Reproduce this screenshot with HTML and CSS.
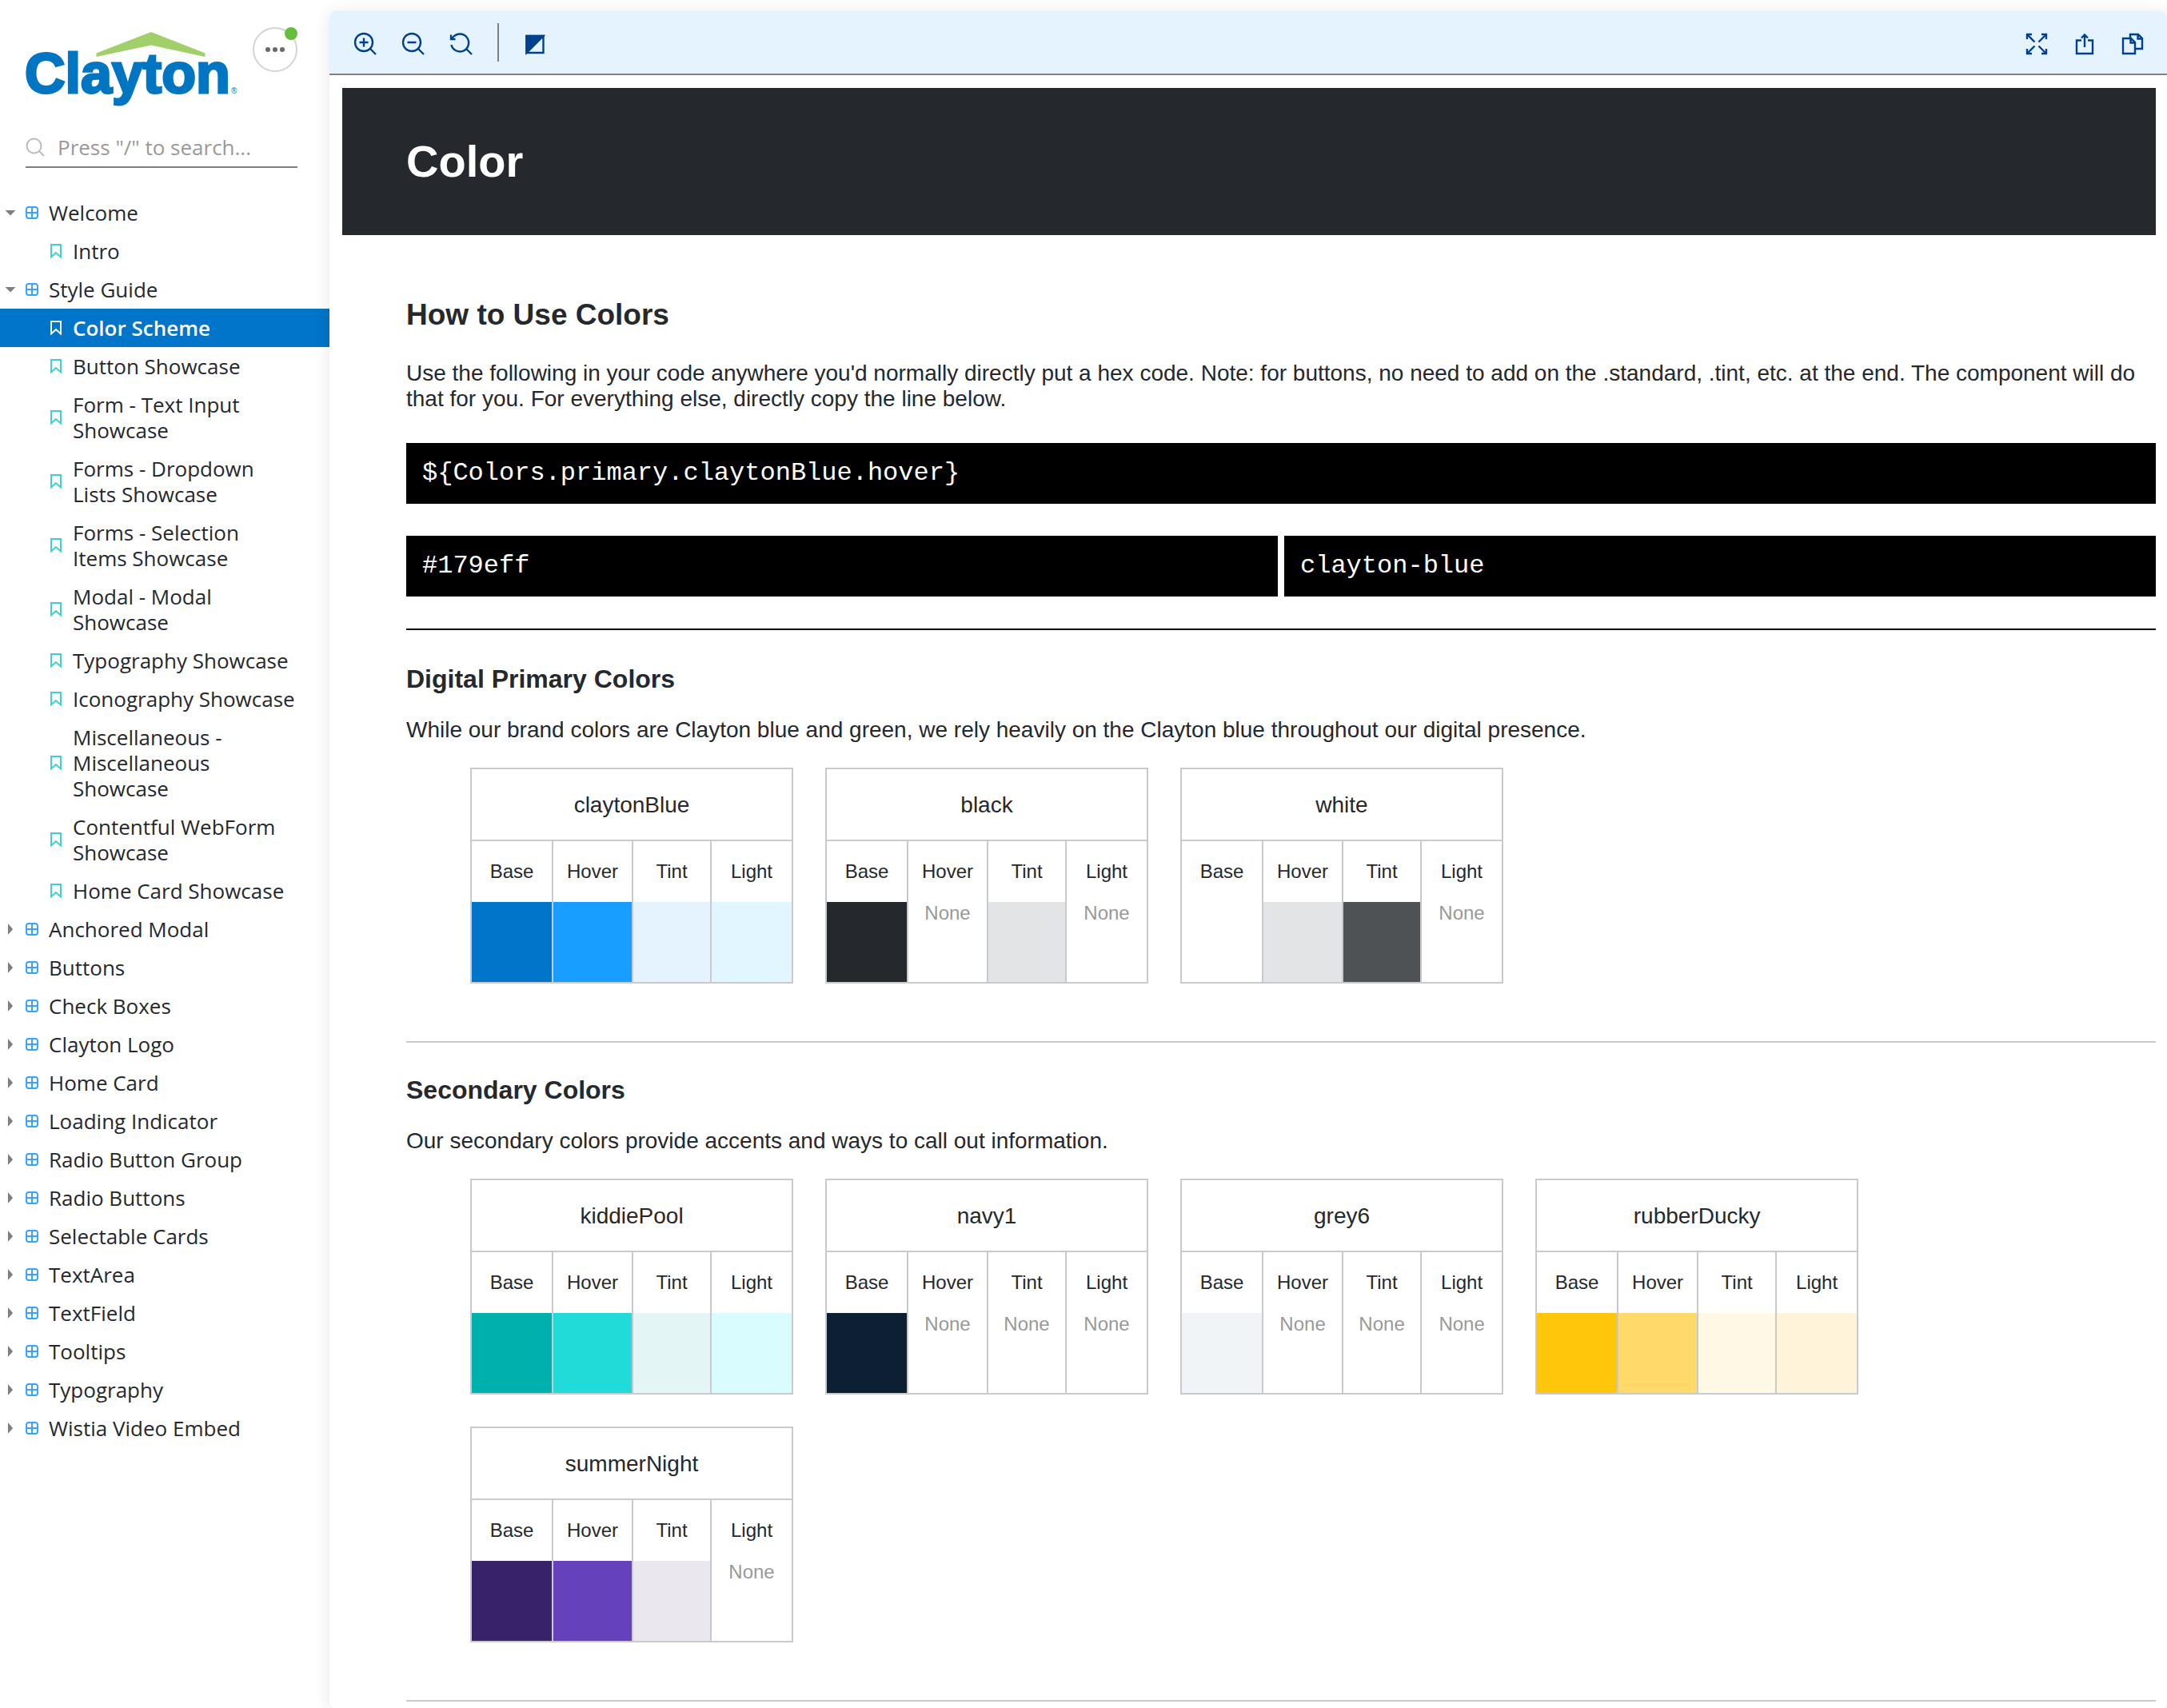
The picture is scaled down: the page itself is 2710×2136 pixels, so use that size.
FILE: index.html
```html
<!DOCTYPE html>
<html lang="en">
<head>
<meta charset="utf-8">
<title>Color Scheme - Clayton</title>
<link rel="stylesheet" href="styles.css">
</head>
<body>
<svg class="sprite" aria-hidden="true">
  <symbol id="component" viewBox="0 0 16 16"><rect x="1" y="1" width="14" height="14" rx="3"/><path d="M8 1v14M1 8h14"/></symbol>
  <symbol id="bookmark" viewBox="0 0 14 18"><path d="M1 1h12v15.500l-6-5.500-6 5.500z"/></symbol>
</svg>
<div class="layout">
  <aside class="sidebar">
    <header class="brand">
      <a class="logo" href="#" aria-label="Clayton">
        <svg width="266" height="92" viewBox="0 0 266 92">
          <path class="roof" d="M88.500 26.500 157 0l67.500 26.500V31L157 16.500 88.500 31z"/>
          <text class="wordmark" x="-1" y="76">Clayton</text>
          <text class="mark" x="257" y="77">®</text>
        </svg>
      </a>
      <button class="menu-button" type="button" aria-label="Menu">
        <svg width="26" height="8" viewBox="0 0 26 8"><circle cx="4" cy="4" r="3"/><circle cx="13" cy="4" r="3"/><circle cx="22" cy="4" r="3"/></svg>
        <span class="badge"></span>
      </button>
    </header>
    <label class="search">
      <svg width="24" height="24" viewBox="0 0 24 24"><circle cx="10.500" cy="10.500" r="9"/><path d="m17 17 6 6"/></svg>
      <input type="text" placeholder="Press &quot;/&quot; to search..." aria-label="Search">
    </label>
    <nav class="tree">
      <a class="group open" href="#"><i></i><svg><use href="#component"/></svg><span>Welcome</span></a>
      <a class="story" href="#"><svg><use href="#bookmark"/></svg><span>Intro</span></a>
      <a class="group open" href="#"><i></i><svg><use href="#component"/></svg><span>Style Guide</span></a>
      <a class="story selected" href="#"><svg><use href="#bookmark"/></svg><span>Color Scheme</span></a>
      <a class="story" href="#"><svg><use href="#bookmark"/></svg><span>Button Showcase</span></a>
      <a class="story" href="#"><svg><use href="#bookmark"/></svg><span>Form - Text Input Showcase</span></a>
      <a class="story" href="#"><svg><use href="#bookmark"/></svg><span>Forms - Dropdown Lists Showcase</span></a>
      <a class="story" href="#"><svg><use href="#bookmark"/></svg><span>Forms - Selection Items Showcase</span></a>
      <a class="story" href="#"><svg><use href="#bookmark"/></svg><span>Modal - Modal Showcase</span></a>
      <a class="story" href="#"><svg><use href="#bookmark"/></svg><span>Typography Showcase</span></a>
      <a class="story" href="#"><svg><use href="#bookmark"/></svg><span>Iconography Showcase</span></a>
      <a class="story" href="#"><svg><use href="#bookmark"/></svg><span>Miscellaneous - Miscellaneous Showcase</span></a>
      <a class="story" href="#"><svg><use href="#bookmark"/></svg><span>Contentful WebForm Showcase</span></a>
      <a class="story" href="#"><svg><use href="#bookmark"/></svg><span>Home Card Showcase</span></a>
      <a class="group" href="#"><i></i><svg><use href="#component"/></svg><span>Anchored Modal</span></a>
      <a class="group" href="#"><i></i><svg><use href="#component"/></svg><span>Buttons</span></a>
      <a class="group" href="#"><i></i><svg><use href="#component"/></svg><span>Check Boxes</span></a>
      <a class="group" href="#"><i></i><svg><use href="#component"/></svg><span>Clayton Logo</span></a>
      <a class="group" href="#"><i></i><svg><use href="#component"/></svg><span>Home Card</span></a>
      <a class="group" href="#"><i></i><svg><use href="#component"/></svg><span>Loading Indicator</span></a>
      <a class="group" href="#"><i></i><svg><use href="#component"/></svg><span>Radio Button Group</span></a>
      <a class="group" href="#"><i></i><svg><use href="#component"/></svg><span>Radio Buttons</span></a>
      <a class="group" href="#"><i></i><svg><use href="#component"/></svg><span>Selectable Cards</span></a>
      <a class="group" href="#"><i></i><svg><use href="#component"/></svg><span>TextArea</span></a>
      <a class="group" href="#"><i></i><svg><use href="#component"/></svg><span>TextField</span></a>
      <a class="group" href="#"><i></i><svg><use href="#component"/></svg><span>Tooltips</span></a>
      <a class="group" href="#"><i></i><svg><use href="#component"/></svg><span>Typography</span></a>
      <a class="group" href="#"><i></i><svg><use href="#component"/></svg><span>Wistia Video Embed</span></a>
    </nav>
  </aside>

  <main class="panel">
    <div class="toolbar">
      <button type="button" aria-label="Zoom in"><svg viewBox="-1 -2 28 28"><circle cx="12" cy="12" r="11"/><path d="M12 6.500v11M6.500 12h11M20 20l7 7"/></svg></button>
      <button type="button" aria-label="Zoom out"><svg viewBox="-1 -2 28 28"><circle cx="12" cy="12" r="11"/><path d="M6.500 12h11M20 20l7 7"/></svg></button>
      <button type="button" aria-label="Reset zoom"><svg viewBox="-1 -2 28 28"><path d="M1.400 15A11 11 0 1 0 4.500 4.500M20 20l7 7"/><path d="M1 2.500V8h5.500M1.500 7.500l3.500-3.500"/></svg></button>
      <span class="divider"></span>
      <button type="button" aria-label="Change background"><svg viewBox="-1 -2 28 28"><path d="M1.500 4h21v21h-21z"/><path class="solid" d="M1.500 4h21l-21 21z"/></svg></button>
      <span class="spacer"></span>
      <button type="button" aria-label="Go full screen"><svg viewBox="-1 -2 28 28"><path d="M11.500 11.500 3 3M16.500 11.500 25 3M11.500 16.500 3 25M16.500 16.500 25 25"/><path d="M2 8V2h6M20 2h6v6M2 20v6h6M20 26h6v-6"/></svg></button>
      <button type="button" aria-label="Open in new tab"><svg viewBox="-1 -2 28 28"><path d="M10 9.500H4V26h20V9.500h-6M14 18V2.500M10 6.500l4-4 4 4"/></svg></button>
      <button type="button" aria-label="Copy link"><svg viewBox="-1 -2 28 28"><path d="M2 7h10l5 5v14H2zM11 7V2h10l5 5v13h-9M11.500 7v5.500H17M20.500 2v5.500H26"/></svg></button>
    </div>
    <div class="canvas">
      <div class="banner"><h1>Color</h1></div>
      <div class="content">
        <h2>How to Use Colors</h2>
        <p class="intro">Use the following in your code anywhere you'd normally directly put a hex code. Note: for buttons, no need to add on the .standard, .tint, etc. at the end. The component will do that for you. For everything else, directly copy the line below.</p>
        <div class="codes">
          <code class="wide">${Colors.primary.claytonBlue.hover}</code>
          <code>#179eff</code>
          <code>clayton-blue</code>
        </div>
        <section class="first">
          <h3>Digital Primary Colors</h3>
          <p>While our brand colors are Clayton blue and green, we rely heavily on the Clayton blue throughout our digital presence.</p>
          <div class="cards">
            <table>
              <colgroup><col class="c1"><col class="c2"><col class="c3"><col class="c4"></colgroup>
              <tr><th class="name" colspan="4">claytonBlue</th></tr>
              <tr><th>Base</th><th>Hover</th><th>Tint</th><th>Light</th></tr>
              <tr><td style="background-color:#0075c9"></td><td style="background-color:#179eff"></td><td style="background-color:#e5f3ff"></td><td style="background-color:#e2f6ff"></td></tr>
            </table>
            <table>
              <colgroup><col class="c1"><col class="c2"><col class="c3"><col class="c4"></colgroup>
              <tr><th class="name" colspan="4">black</th></tr>
              <tr><th>Base</th><th>Hover</th><th>Tint</th><th>Light</th></tr>
              <tr><td style="background-color:#25282d"></td><td>None</td><td style="background-color:#e3e4e6"></td><td>None</td></tr>
            </table>
            <table>
              <colgroup><col class="c1"><col class="c2"><col class="c3"><col class="c4"></colgroup>
              <tr><th class="name" colspan="4">white</th></tr>
              <tr><th>Base</th><th>Hover</th><th>Tint</th><th>Light</th></tr>
              <tr><td style="background-color:#ffffff"></td><td style="background-color:#e3e4e6"></td><td style="background-color:#4f5254"></td><td>None</td></tr>
            </table>
          </div>
        </section>
        <section>
          <h3>Secondary Colors</h3>
          <p>Our secondary colors provide accents and ways to call out information.</p>
          <div class="cards">
            <table>
              <colgroup><col class="c1"><col class="c2"><col class="c3"><col class="c4"></colgroup>
              <tr><th class="name" colspan="4">kiddiePool</th></tr>
              <tr><th>Base</th><th>Hover</th><th>Tint</th><th>Light</th></tr>
              <tr><td style="background-color:#00b0ad"></td><td style="background-color:#20dbd7"></td><td style="background-color:#e3f6f5"></td><td style="background-color:#d9fdff"></td></tr>
            </table>
            <table>
              <colgroup><col class="c1"><col class="c2"><col class="c3"><col class="c4"></colgroup>
              <tr><th class="name" colspan="4">navy1</th></tr>
              <tr><th>Base</th><th>Hover</th><th>Tint</th><th>Light</th></tr>
              <tr><td style="background-color:#0c1f33"></td><td>None</td><td>None</td><td>None</td></tr>
            </table>
            <table>
              <colgroup><col class="c1"><col class="c2"><col class="c3"><col class="c4"></colgroup>
              <tr><th class="name" colspan="4">grey6</th></tr>
              <tr><th>Base</th><th>Hover</th><th>Tint</th><th>Light</th></tr>
              <tr><td style="background-color:#f1f4f7"></td><td>None</td><td>None</td><td>None</td></tr>
            </table>
            <table>
              <colgroup><col class="c1"><col class="c2"><col class="c3"><col class="c4"></colgroup>
              <tr><th class="name" colspan="4">rubberDucky</th></tr>
              <tr><th>Base</th><th>Hover</th><th>Tint</th><th>Light</th></tr>
              <tr><td style="background-color:#ffc60b"></td><td style="background-color:#ffda6b"></td><td style="background-color:#fff8e5"></td><td style="background-color:#fff4d9"></td></tr>
            </table>
            <table>
              <colgroup><col class="c1"><col class="c2"><col class="c3"><col class="c4"></colgroup>
              <tr><th class="name" colspan="4">summerNight</th></tr>
              <tr><th>Base</th><th>Hover</th><th>Tint</th><th>Light</th></tr>
              <tr><td style="background-color:#382268"></td><td style="background-color:#6542bc"></td><td style="background-color:#eae8ee"></td><td>None</td></tr>
            </table>
          </div>
        </section>
        <hr>
      </div>
    </div>
  </main>
</div>
</body>
</html>
```
FILE: styles.css
```css
* { box-sizing: border-box; }

body {
  margin: 0;
  background: #fff;
  color: #25282d;
  font-family: "Liberation Sans", Arial, sans-serif;
  font-size: 28px;
  line-height: 32px;
}

h1, h2, h3, p { margin: 0; }
a { color: inherit; text-decoration: none; }
svg { display: block; flex: none; overflow: visible; }
button { padding: 0; border: 0; background: none; cursor: pointer; }
.sprite { position: absolute; width: 0; height: 0; }

.layout { display: flex; min-height: 100vh; }

/* Sidebar */
.sidebar {
  flex: none;
  width: 412px;
  font-family: "Open Sans", "Noto Sans", sans-serif;
  font-size: 26px;
}
.brand {
  display: flex;
  justify-content: space-between;
  align-items: flex-start;
  padding: 34px 40px 0 32px;
}
.logo { padding-top: 6px; }
.roof { fill: #a1d06a; }
.wordmark {
  fill: #0075c1;
  stroke: #0075c1;
  stroke-width: 3px;
  font: bold 70px "Liberation Sans", Arial, sans-serif;
}
.mark { fill: #0075c1; font: 10px "Liberation Sans", Arial, sans-serif; }
.menu-button {
  position: relative;
  display: flex;
  align-items: center;
  justify-content: center;
  width: 56px;
  height: 56px;
  border: 2px solid #d3d4d5;
  border-radius: 50%;
  fill: #66696d;
}
.badge {
  position: absolute;
  top: -2px;
  right: -2px;
  width: 16px;
  height: 16px;
  border-radius: 50%;
  background: #66bf3c;
}
.search {
  display: flex;
  align-items: center;
  gap: 16px;
  height: 50px;
  margin: 28px 40px 32px 32px;
  border-bottom: 2px solid #7f7f7f;
}
.search svg { fill: none; stroke: #bbb; stroke-width: 2px; }
.search input {
  flex: 1;
  min-width: 0;
  padding: 0;
  border: 0;
  outline: 0;
  background: none;
  color: inherit;
  font: inherit;
}
.search input::placeholder { color: #999; opacity: 1; }

.tree a {
  display: flex;
  align-items: center;
  padding: 8px 40px 8px 63px;
}
.tree svg { width: 14px; height: 18px; margin-right: 14px; fill: none; stroke: #37d5d3; stroke-width: 2px; }
.tree .group { padding-left: 6px; }
.tree .group svg { width: 16px; height: 16px; margin-right: 13px; stroke: #37a4f8; }
.tree i {
  width: 16px;
  margin-right: 10px;
  padding-left: 4px;
}
.tree i::before {
  content: "";
  display: block;
  width: 6px;
  height: 14px;
  background: #7f7f7f;
  clip-path: polygon(0 0, 100% 50%, 0 100%);
}
.tree .open i { padding-left: 0; }
.tree .open i::before {
  width: 14px;
  height: 7px;
  clip-path: polygon(0 0, 100% 0, 50% 100%);
}
.tree .selected { background: #0075c9; color: #fff; font-weight: 600; }
.tree .selected svg { stroke: #fff; }

/* Preview panel */
.panel {
  flex: 1;
  min-width: 0;
  margin-top: 14px;
  border-radius: 8px;
  background: #fff;
  box-shadow: 0 2px 20px rgba(0, 0, 0, .1);
}
.toolbar {
  display: flex;
  align-items: center;
  gap: 32px;
  height: 80px;
  padding: 0 30px;
  border-bottom: 2px solid #7f8183;
  border-radius: 8px 8px 0 0;
  background: #e5f3ff;
}
.toolbar svg { width: 28px; height: 28px; fill: none; stroke: #00418f; stroke-width: 2.4px; }
.toolbar .solid { fill: #00418f; }
.divider { width: 2px; height: 48px; background: #7f7f7f; }
.spacer { flex: 1; }

.canvas { padding: 16px 14px 0 16px; }
.banner { padding: 60px 80px; background: #25282d; color: #fff; }
h1 { font-size: 56px; line-height: 64px; }
.content { padding: 78px 0 0 80px; }
h2 { margin-bottom: 35px; font-size: 37px; line-height: 44px; }
h3 { margin-bottom: 30px; font-size: 32px; line-height: 36px; }
.intro { margin-bottom: 39px; }

.codes {
  display: grid;
  grid-template-columns: 1fr 1fr;
  gap: 40px 8px;
  margin-bottom: 40px;
}
.codes code {
  padding: 20px;
  background: #000;
  color: #fff;
  font: 32px/36px "Liberation Mono", "Courier New", monospace;
}
.codes .wide { grid-column: 1 / -1; }

section { padding: 41px 0 72px; border-top: 2px solid #c7cace; }
.first { padding-top: 43px; border-top-color: #000; }
hr { margin: 0; border: 0; border-top: 2px solid #c7cace; }

.cards { display: flex; flex-wrap: wrap; gap: 40px; padding: 31px 0 0 80px; }
table {
  width: 404px;
  table-layout: fixed;
  border: 2px solid #c7cace;
  border-spacing: 0;
  font-size: 24px;
  line-height: 28px;
  text-align: center;
}
.c1 { width: 102px; }
.c2, .c4 { width: 100px; }
.c3 { width: 98px; }
th, td { height: 76px; padding: 0; border-right: 2px solid #c7cace; font-weight: 400; }
td { height: 100px; color: #999; vertical-align: top; }
th:last-child, td:last-child { border-right: 0; }
.name { height: 90px; padding-top: 2px; border-bottom: 2px solid #c7cace; font-size: 28px; }
```
